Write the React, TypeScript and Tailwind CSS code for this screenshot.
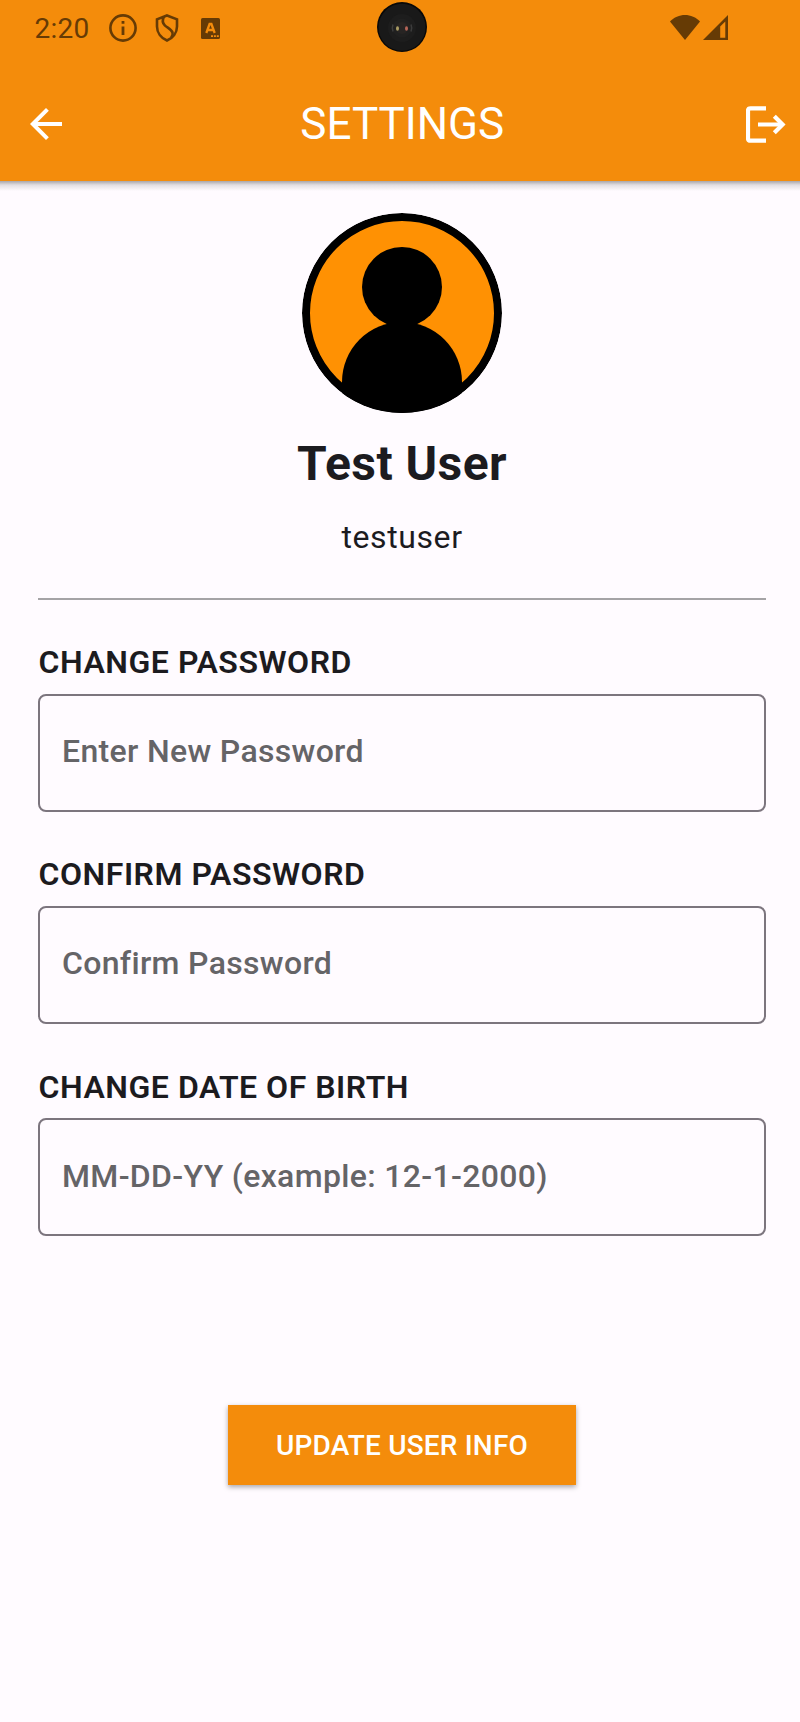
type FieldProps = { label: string; placeholder: string };

function Field({ label, placeholder }: FieldProps) {
  return (
    <label className="block h-[212.4px]">
      <span className="block h-[51.6px] pl-[0.6px] text-[32px] leading-10 font-semibold tracking-[0.52px] whitespace-nowrap">{label}</span>
      <input
        type="text"
        placeholder={placeholder}
        className="block h-[118px] w-full rounded-lg border-2 border-[#7c757e] bg-transparent pr-6 pb-[3px] pl-[22px] text-[32px] font-medium tracking-[0.33px] placeholder:text-[#656467]"
      />
    </label>
  );
}

function StatusBar() {
  return (
    <div className="flex h-14 items-start pt-[13px] pl-[34px] text-[#663b05]">
      <span className="-mt-px w-[74px] pl-[0.6px] text-[28px] leading-[34px] tracking-[0.2px]">2:20</span>
      <svg className="h-7 w-7 mt-px ml-px" viewBox="0 0 28 28" fill="none">
        <circle cx="14" cy="14" r="12.6" stroke="currentColor" strokeWidth="2.6" />
        <path d="M12.6 7h2.8v2.8h-2.8zM12.6 12.4h2.8V21h-2.8z" fill="currentColor" />
      </svg>
      <svg className="mt-px ml-[18px] h-7 w-6" viewBox="0 0 24 28" fill="none" stroke="currentColor" strokeWidth="2.6">
        <path d="M12 1.5 22 5.3v7.2c0 6.2-4.2 11.6-10 14C6.200 24.100 2 18.700 2 12.500V5.300z" />
        <path d="M9 2.600C7.400 5.500 7.500 9 9.800 11.300c2.400 2.400 6.700 3.900 7.700 7.200.5 1.700 0 3.300-1.300 5" />
      </svg>
      <svg className="mt-[5px] ml-[22px] h-[21px] w-[19px]" viewBox="0 0 19 21">
        <rect width="19" height="21" rx="1.600" fill="currentColor" />
        <path d="m5.300 15 3.300-9h1.800l3.300 9M6.700 12h5.600" fill="none" stroke="#f48c0b" strokeWidth="2.3" />
        <path d="M10 17.300h2v1.800h-2zm2.900 0h2v1.800h-2zm2.900 0h2v1.800h-2z" fill="#f48c0b" />
      </svg>
      <svg className="-mt-[11px] ml-[157px] h-[50px] w-[50px]" viewBox="0 0 50 50">
        <circle cx="25" cy="25" r="25" fill="#080808" />
        <circle cx="25" cy="25.300" r="23.500" fill="#191919" />
        <circle cx="25" cy="26" r="14" fill="#1d1d1d" />
        <circle cx="25" cy="26" r="9.500" fill="#202020" />
        <path d="M16 22.500a9 9 0 0 0 0 7M34 22.500a9 9 0 0 1 0 7" fill="none" stroke="#3c3c3c" strokeWidth="1.500" />
        <circle cx="25" cy="26" r="6" fill="#272423" />
        <ellipse cx="20.500" cy="26.500" rx="1.500" ry="2.200" fill="#aa9d64" />
        <ellipse cx="29.500" cy="26.500" rx="1.500" ry="2.200" fill="#b76558" />
      </svg>
      <svg className="mt-[2px] ml-[243px] h-[25px] w-[30px]" viewBox="0 0 30 25">
        <path d="M0 6.600C8-2.200 22-2.200 30 6.600L15 25z" fill="currentColor" />
      </svg>
      <svg className="mt-[2px] ml-[3px] h-[25px] w-[25px]" viewBox="0 0 25 25">
        <path fillRule="evenodd" d="M25 0v25H0zM22.300 6.500 17.200 11.600V22.700h5.100z" fill="currentColor" />
      </svg>
    </div>
  );
}

export default function App() {
  return (
    <div className="min-h-[1722px] w-[800px] overflow-hidden bg-[#fffbff] font-[Roboto,sans-serif] text-[#1c1b1f]">
      <header className="h-[181px] bg-[#f48c0b]">
        <StatusBar />
        <div className="flex h-[125px] items-center pr-[14px] pl-[22px] text-white">
          <button aria-label="Back" className="mt-[11px] h-12 w-12">
            <svg viewBox="0 0 24 24" fill="currentColor">
              <path d="M20 11H7.830l5.590-5.590L12 4l-8 8 8 8 1.410-1.410L7.830 13H20v-2z" />
            </svg>
          </button>
          <h1 className="mt-[10px] flex-1 pr-[11.5px] text-center text-[44px] leading-[52px] font-normal">SETTINGS</h1>
          <button aria-label="Log out" className="mt-[11px] h-[37px] w-10">
            <svg viewBox="0 0 40 37" fill="none" stroke="currentColor" strokeWidth="4.200">
              <path d="M20 2.300H4.500Q2 2.300 2 4.800v27.400q0 2.500 2.500 2.500H20M12 18.500h25" />
              <path d="m28.300 10.200 8.300 8.300-8.300 8.300" />
            </svg>
          </button>
        </div>
      </header>
      <div className="h-[10px] bg-linear-to-b from-[#a9a6a9] via-[#e2dee2] via-40% to-[#fffbff]" />

      <main className="pr-[34px] pl-[38px]">
        <section className="flex h-[409px] flex-col items-center border-b-2 border-[#a5a3a6] pt-[21.5px]">
          <svg className="h-[200px] w-[200px] shrink-0" viewBox="0 0 200 200">
            <clipPath id="avatar-disc"><circle cx="100" cy="100" r="100" /></clipPath>
            <g clipPath="url(#avatar-disc)">
              <circle cx="100" cy="100" r="96" fill="#ff9103" stroke="#000" strokeWidth="8" />
              <circle cx="100" cy="74" r="40" />
              <path d="M40 169a60 60 0 0 1 120 0v31H40z" />
            </g>
          </svg>
          <h2 className="mt-[23px] text-[48px] leading-[56px] font-bold tracking-[0.45px]">Test User</h2>
          <p className="mt-[25.5px] text-[32px] leading-10 tracking-[0.6px]">testuser</p>
        </section>

        <form className="flex flex-col pt-[42px]">
          <Field label="CHANGE PASSWORD" placeholder="Enter New Password" />
          <Field label="CONFIRM PASSWORD" placeholder="Confirm Password" />
          <Field label="CHANGE DATE OF BIRTH" placeholder="MM-DD-YY (example: 12-1-2000)" />
          <button
            type="button"
            className="mt-[125.5px] h-20 w-[348px] self-center bg-[#f48c0b] pt-[2px] text-[28px] font-medium tracking-[0.18px] text-white shadow-[0_2px_5px_rgba(0,0,0,0.35)]"
          >
            UPDATE USER INFO
          </button>
        </form>
      </main>
    </div>
  );
}
